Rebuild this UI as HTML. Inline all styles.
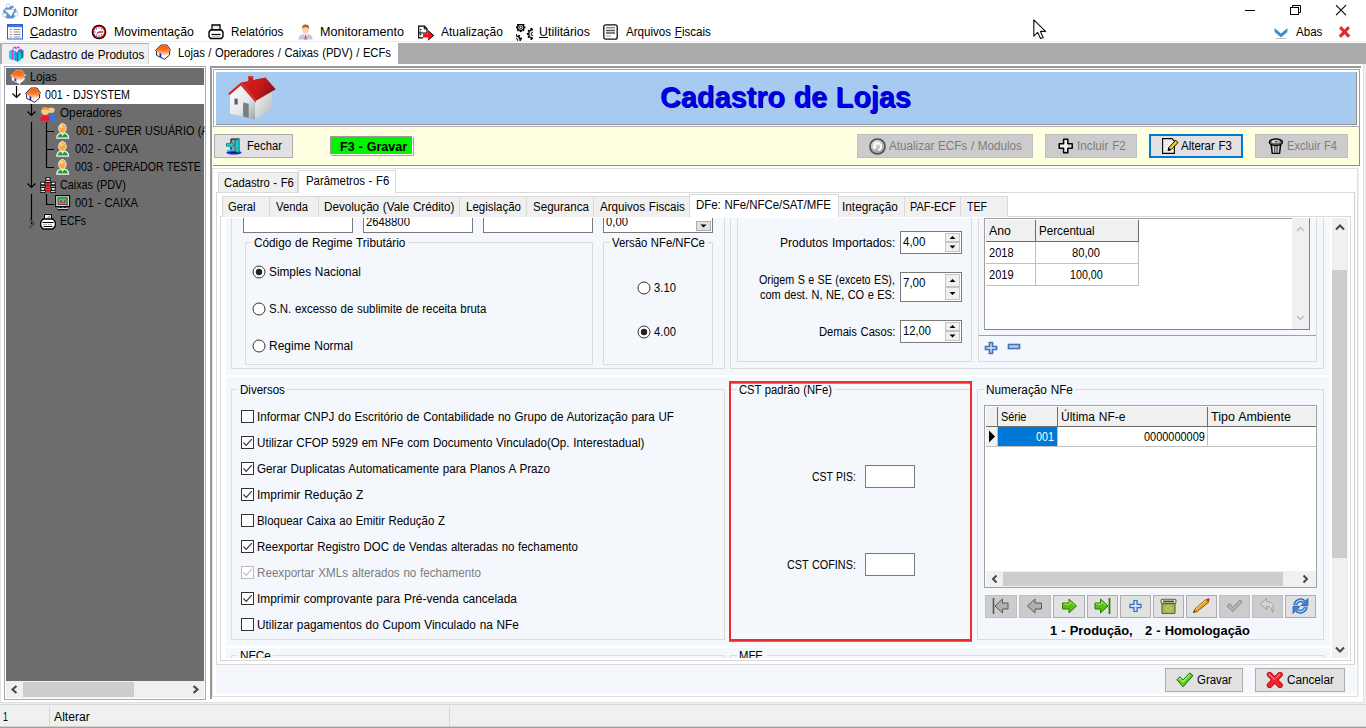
<!DOCTYPE html>
<html lang="pt-BR"><head><meta charset="utf-8"><title>DJMonitor</title>
<style>
html,body{margin:0;padding:0;}
body{width:1366px;height:728px;overflow:hidden;background:#fff;font-family:"Liberation Sans", sans-serif;font-size:12px;position:relative;}
#app{position:absolute;left:0;top:0;width:1366px;height:728px;overflow:hidden;}
#app div,#app span.t,#app svg{position:absolute;box-sizing:border-box;}
span.t{white-space:pre;display:block;word-spacing:0.5px;transform-origin:0 0;}
u{text-decoration:underline;text-underline-offset:1px;}
</style></head>
<body><div id="app">
<div style="left:0px;top:0px;width:1366px;height:22px;background:#fff;"></div>
<svg style="left:1.5px;top:2.5px" width="17" height="17"><path d="M1.4 7L4.6 4.2L11.4 2.4L11.6 4.4L8.4 6.6L14 5.4L15.2 11.4L11 15.6L5 15.4L1 12Z" fill="#5c90d0"/><path d="M2.6 6.8L12.6 6.4L9 13.2Z" fill="#fff"/><circle cx="6.2" cy="2.8" r="2" fill="#fff" stroke="#9cbce4" stroke-width=".7"/><circle cx="2.6" cy="12" r="2" fill="#fff" stroke="#9cbce4" stroke-width=".7"/><circle cx="14" cy="11.2" r="2" fill="#fff" stroke="#9cbce4" stroke-width=".7"/></svg>
<span id="t0" class="t" style="left:23.4px;top:5px;font-size:12px;line-height:14px;color:#000;transform:scaleX(1.0130);">DJMonitor</span>
<svg style="left:1240px;top:0;" width="126" height="22" viewBox="0 0 126 22"><g stroke="#000" stroke-width="1" fill="none"><path d="M5 10.5H15"/><rect x="50.5" y="7.5" width="8" height="7"/><path d="M52.5 7.5V5.5H60.5V12.5H58.5"/><path d="M96 5.2L106 15.2M106 5.2L96 15.2" stroke-width="1.1"/></g></svg>
<div style="left:0px;top:22px;width:1366px;height:21px;background:#fff;"></div>
<div style="left:0px;top:41px;width:1366px;height:1px;background:#ececec;"></div>
<span id="t1" class="t" style="left:30.4px;top:25px;font-size:12px;line-height:14px;color:#000;transform:scaleX(0.9630);"><u>C</u>adastro</span>
<span id="t2" class="t" style="left:114.4px;top:25px;font-size:12px;line-height:14px;color:#000;transform:scaleX(1.0237);">Movimentação</span>
<span id="t3" class="t" style="left:231.4px;top:25px;font-size:12px;line-height:14px;color:#000;transform:scaleX(0.9698);">Relatórios</span>
<span id="t4" class="t" style="left:320.4px;top:25px;font-size:12px;line-height:14px;color:#000;transform:scaleX(1.0481);">Monitoramento</span>
<span id="t5" class="t" style="left:440.9px;top:25px;font-size:12px;line-height:14px;color:#000;transform:scaleX(0.9976);">Atualização</span>
<span id="t6" class="t" style="left:538.9px;top:25px;font-size:12px;line-height:14px;color:#000;transform:scaleX(1.0312);"><u>U</u>tilitários</span>
<span id="t7" class="t" style="left:625.9px;top:25px;font-size:12px;line-height:14px;color:#000;transform:scaleX(0.9660);">Arquivos <u>F</u>iscais</span>
<span id="t8" class="t" style="left:1296.4px;top:25px;font-size:12px;line-height:14px;color:#000;transform:scaleX(0.9649);">Abas</span>
<svg style="left:7px;top:24px" width="16" height="16"><rect x=".5" y=".5" width="15" height="14.5" fill="#fff" stroke="#2f5fd8"/><rect x="1" y="1" width="14" height="2.2" fill="#3f74e8"/><g stroke="#8a8a9a" stroke-width="1"><path d="M2.5 5.5H5M2.5 8H5M2.5 10.5H5M2.5 13H5" stroke="#c08aa8"/><path d="M6.5 5.5H13.5M6.5 8H13.5M6.5 10.5H13.5M6.5 13H13.5"/></g></svg>
<svg style="left:91px;top:24px" width="16" height="16"><circle cx="8" cy="8" r="7.3" fill="#000"/><circle cx="8" cy="8" r="6.3" fill="#e81010"/><circle cx="8" cy="8" r="5" fill="#fff"/><g fill="#1030e0"><rect x="7.5" y="3.5" width="1" height="1"/><rect x="7.5" y="11.5" width="1" height="1"/><rect x="3.5" y="7.5" width="1" height="1"/><rect x="10" y="4.5" width="1" height="1"/><rect x="5" y="4.5" width="1" height="1"/><rect x="5" y="10.5" width="1" height="1"/><rect x="10" y="10.5" width="1" height="1"/></g><path d="M6.5 9L8 8H12" stroke="#000" stroke-width="1" fill="none"/><path d="M6 9.5L8 8" stroke="#e81010" stroke-width="1"/></svg>
<svg style="left:208px;top:24px" width="16" height="16"><path d="M4 1H12V6H4Z" fill="#f4eef4" stroke="#000" stroke-width="1.3"/><path d="M2.5 6H13.5L15 8V12.5L13.5 14.5H2.5L1 12.5V8Z" fill="#fff" stroke="#000" stroke-width="1.4"/><path d="M3.5 10.5H12.5" stroke="#000" stroke-width="1.2"/><path d="M4 12.5H12" stroke="#bbb" stroke-width="1"/></svg>
<svg style="left:298px;top:24px" width="15" height="16"><path d="M0.5 15.5C0.5 11 4 10 7.5 10C11 10 14.5 11 14.5 15.5Z" fill="#c9c2e6"/><path d="M5 10.5L7.5 13L10 10.5Z" fill="#fff"/><path d="M7 11H8.2L8.8 15.5H6.4Z" fill="#e8506a"/><ellipse cx="7.5" cy="5.5" rx="3.3" ry="4.2" fill="#f6d2b0"/><path d="M4 5C3.8 1.5 6 .3 8 .5C10.5 .6 11.5 2.5 11 5C10 3.5 8.5 3 7 3.2C5.5 3.2 4.5 4 4 5Z" fill="#a8661c"/></svg>
<svg style="left:418px;top:24.5px" width="16" height="16"><path d="M.7 1.2H6.5L9 3.8V8H.7Z M.7 8V12.8H5" fill="#fff" stroke="#000" stroke-width="1.2"/><path d="M6.3 1.2V4H9" fill="none" stroke="#000" stroke-width="1"/><g fill="#000"><rect x="2" y="4" width="1.2" height="1.2"/><rect x="2" y="6.5" width="1.2" height="1.2"/><rect x="2" y="9" width="1.2" height="1.2"/></g><path d="M5 8.5H10V5.5L15.8 10.5L10 15.2V12.5H5Z" fill="#f01018"/><path d="M10 5.5L15.8 10.5L10 15.2" fill="none" stroke="#000" stroke-width=".9"/></svg>
<svg style="left:516px;top:24px" width="16.5" height="16.5"><g fill="#000"><rect x="3.70" y="-1.30" width="2" height="2.20" transform="rotate(0.0 4.7 3.4)"/><rect x="3.70" y="-1.30" width="2" height="2.20" transform="rotate(45.0 4.7 3.4)"/><rect x="3.70" y="-1.30" width="2" height="2.20" transform="rotate(90.0 4.7 3.4)"/><rect x="3.70" y="-1.30" width="2" height="2.20" transform="rotate(135.0 4.7 3.4)"/><rect x="3.70" y="-1.30" width="2" height="2.20" transform="rotate(180.0 4.7 3.4)"/><rect x="3.70" y="-1.30" width="2" height="2.20" transform="rotate(225.0 4.7 3.4)"/><rect x="3.70" y="-1.30" width="2" height="2.20" transform="rotate(270.0 4.7 3.4)"/><rect x="3.70" y="-1.30" width="2" height="2.20" transform="rotate(315.0 4.7 3.4)"/></g><circle cx="4.7" cy="3.4" r="3.1" fill="#f0e4f2" stroke="#000" stroke-width="1.3"/><circle cx="4.7" cy="3.4" r="1.30" fill="#fff" stroke="#000" stroke-width=".9"/><g fill="#000"><rect x="16.00" y="3.70" width="2" height="2.60" transform="rotate(18.0 17 9.9)"/><rect x="16.00" y="3.70" width="2" height="2.60" transform="rotate(54.0 17 9.9)"/><rect x="16.00" y="3.70" width="2" height="2.60" transform="rotate(90.0 17 9.9)"/><rect x="16.00" y="3.70" width="2" height="2.60" transform="rotate(126.0 17 9.9)"/><rect x="16.00" y="3.70" width="2" height="2.60" transform="rotate(162.0 17 9.9)"/><rect x="16.00" y="3.70" width="2" height="2.60" transform="rotate(198.0 17 9.9)"/><rect x="16.00" y="3.70" width="2" height="2.60" transform="rotate(234.0 17 9.9)"/><rect x="16.00" y="3.70" width="2" height="2.60" transform="rotate(270.0 17 9.9)"/><rect x="16.00" y="3.70" width="2" height="2.60" transform="rotate(306.0 17 9.9)"/><rect x="16.00" y="3.70" width="2" height="2.60" transform="rotate(342.0 17 9.9)"/></g><circle cx="17" cy="9.9" r="4.2" fill="#f0e4f2" stroke="#000" stroke-width="1.3"/><circle cx="17" cy="9.9" r="1.76" fill="#fff" stroke="#000" stroke-width=".9"/><g fill="#000"><rect x="-1.20" y="9.90" width="2" height="2.60" transform="rotate(0.0 -0.2 16.3)"/><rect x="-1.20" y="9.90" width="2" height="2.60" transform="rotate(36.0 -0.2 16.3)"/><rect x="-1.20" y="9.90" width="2" height="2.60" transform="rotate(72.0 -0.2 16.3)"/><rect x="-1.20" y="9.90" width="2" height="2.60" transform="rotate(108.0 -0.2 16.3)"/><rect x="-1.20" y="9.90" width="2" height="2.60" transform="rotate(144.0 -0.2 16.3)"/><rect x="-1.20" y="9.90" width="2" height="2.60" transform="rotate(180.0 -0.2 16.3)"/><rect x="-1.20" y="9.90" width="2" height="2.60" transform="rotate(216.0 -0.2 16.3)"/><rect x="-1.20" y="9.90" width="2" height="2.60" transform="rotate(252.0 -0.2 16.3)"/><rect x="-1.20" y="9.90" width="2" height="2.60" transform="rotate(288.0 -0.2 16.3)"/><rect x="-1.20" y="9.90" width="2" height="2.60" transform="rotate(324.0 -0.2 16.3)"/></g><circle cx="-0.2" cy="16.3" r="4.4" fill="#f0e4f2" stroke="#000" stroke-width="1.3"/><circle cx="-0.2" cy="16.3" r="1.85" fill="#fff" stroke="#000" stroke-width=".9"/></svg>
<svg style="left:603px;top:24px" width="15" height="16"><rect x=".8" y=".8" width="13.4" height="14.4" rx="2" fill="#fff" stroke="#111" stroke-width="1.3"/><path d="M3 3.8H12" stroke="#4a5a80" stroke-width="1"/><path d="M3 6.5H12M3 9H12" stroke="#555" stroke-width="1.5"/><path d="M3 12H8" stroke="#999" stroke-width="1"/></svg>
<svg style="left:1274px;top:27px" width="14" height="12"><path d="M.6 1L7 6.4L13.4 1V5L7 10.4L.6 5Z" fill="#3a93c8"/><path d="M1.5 11.5H12.5" stroke="#bfc6cc" stroke-width="1"/></svg>
<svg style="left:1338px;top:26px" width="13" height="12"><path d="M1.5 2.2L3.2 .6L6.5 3.9L9.8 .6L11.5 2.2L8.3 5.8L11.8 9.6L10 11.4L6.5 7.8L3 11.4L1.2 9.6L4.7 5.8Z" fill="#e8262c" stroke="#b01218" stroke-width=".6"/></svg>
<svg style="left:1032.5px;top:18.5px" width="14" height="21"><path d="M.8 .9V17.2L4.7 13.4L7.5 19.6L10.2 18.4L7.4 12.4H12.6Z" fill="#fff" stroke="#111" stroke-width="1.1" stroke-linejoin="round"/></svg>
<div style="left:0px;top:43px;width:1366px;height:21px;background:#ababab;"></div>
<div style="left:2px;top:44px;width:147px;height:20px;background:#f0f0f0;border-right:1px solid #d4d4d4;"></div>
<div style="left:149px;top:43px;width:249px;height:23px;background:#fff;"></div>
<span id="t9" class="t" style="left:30.4px;top:48px;font-size:12px;line-height:14px;color:#000;transform:scaleX(0.9715);">Cadastro de Produtos</span>
<span id="t10" class="t" style="left:177.9px;top:46px;font-size:12px;line-height:14px;color:#000;transform:scaleX(0.9327);">Lojas / Operadores / Caixas (PDV) / ECFs</span>
<svg style="left:8px;top:46px" width="16" height="16"><path d="M1 5L4.5 3.5L8 5V12.5L4.5 14L1 12.5Z" fill="#00e0e8"/><path d="M6 7L9.5 5.5L13 7V14L9.5 15.5L6 14Z" fill="#00d0d8"/><path d="M10 4L13 3L15.5 4.5V11.5L13 13V7L10 5.5Z" fill="#008c94"/><path d="M9.5 6V15.5" stroke="#008088" stroke-width="1.2"/><path d="M4.5 3.5V14M7.8 6.3V14.8M12 4V7" stroke="#ff20e0" stroke-width="1.3"/><path d="M5 2.5L7 1L8 2.5L10.5 .8L11.5 2.5" fill="none" stroke="#ff20e0" stroke-width="1.2"/></svg>
<svg style="left:155px;top:44px" width="16" height="16"><defs><linearGradient id="rf155_44" x1="0" y1="0" x2="0" y2="1"><stop offset="0" stop-color="#ff5a00"/><stop offset=".45" stop-color="#ff7a24"/><stop offset=".75" stop-color="#ffc0a0"/><stop offset="1" stop-color="#ffffff"/></linearGradient></defs><path d="M5.8 1H12L15.5 6.2L14.6 7V11L9.5 15.3L1.6 11.4V7.2L.5 6.6Z" fill="#fff" stroke="#2a262e" stroke-width="1" stroke-linejoin="round"/><path d="M6 1.5H11.7L14.9 6.2L14 7V9.5L9.5 12.5L3.5 9.4L2.2 7.2L1.2 6.5Z" fill="url(#rf155_44)"/><path d="M5.4 9.4V13" stroke="#1432e0" stroke-width="1.8"/></svg>
<div style="left:0px;top:64px;width:1366px;height:664px;background:#f0f0f0;"></div>
<div style="left:0px;top:64px;width:1363px;height:639px;background:#fff;"></div>
<div style="left:0px;top:64px;width:1px;height:639px;background:#e4e4e4;"></div>
<div style="left:4px;top:66px;width:202px;height:634px;background:#fff;border:1px solid #a3a8b3;"></div>
<div style="left:6px;top:68px;width:198px;height:613px;background:#6d6d6d;"></div>
<div style="left:6px;top:85px;width:198px;height:19px;background:#fff;"></div>
<span id="t11" class="t" style="left:29.9px;top:70px;font-size:12px;line-height:14px;color:#000;transform:scaleX(0.9377);">Lojas</span>
<span id="t12" class="t" style="left:44.9px;top:88px;font-size:12px;line-height:14px;color:#000;transform:scaleX(0.8871);">001 - DJSYSTEM</span>
<span id="t13" class="t" style="left:59.9px;top:106px;font-size:12px;line-height:14px;color:#000;transform:scaleX(0.9767);">Operadores</span>
<span id="t14" class="t" style="left:75.9px;top:124px;font-size:12px;line-height:14px;color:#000;transform:scaleX(0.8992);width:142.9px;overflow:hidden;">001 - SUPER USUÁRIO (ADM)</span>
<span id="t15" class="t" style="left:74.9px;top:142px;font-size:12px;line-height:14px;color:#000;transform:scaleX(0.9291);">002 - CAIXA</span>
<span id="t16" class="t" style="left:74.9px;top:160px;font-size:12px;line-height:14px;color:#000;transform:scaleX(0.8825);">003 - OPERADOR TESTE</span>
<span id="t17" class="t" style="left:59.9px;top:178px;font-size:12px;line-height:14px;color:#000;transform:scaleX(0.9004);">Caixas (PDV)</span>
<span id="t18" class="t" style="left:74.9px;top:196px;font-size:12px;line-height:14px;color:#000;transform:scaleX(0.9291);">001 - CAIXA</span>
<span id="t19" class="t" style="left:59.9px;top:214px;font-size:12px;line-height:14px;color:#000;transform:scaleX(0.8633);">ECFs</span>
<svg style="left:10px;top:69px" width="16" height="16"><defs><linearGradient id="rf10_69" x1="0" y1="0" x2="0" y2="1"><stop offset="0" stop-color="#ff5a00"/><stop offset=".45" stop-color="#ff7a24"/><stop offset=".75" stop-color="#ffc0a0"/><stop offset="1" stop-color="#ffffff"/></linearGradient></defs><path d="M5.8 1H12L15.5 6.2L14.6 7V11L9.5 15.3L1.6 11.4V7.2L.5 6.6Z" fill="#fff" stroke="#8a8a8a" stroke-width="1" stroke-linejoin="round"/><path d="M6 1.5H11.7L14.9 6.2L14 7V9.5L9.5 12.5L3.5 9.4L2.2 7.2L1.2 6.5Z" fill="url(#rf10_69)"/><path d="M5.4 9.4V13" stroke="#1432e0" stroke-width="1.8"/><g fill="#fff" opacity=".85"><rect x="2" y="8" width="1" height="1"/><rect x="3" y="10" width="1" height="1"/><rect x="5" y="12" width="1" height="1"/><rect x="7" y="13" width="1" height="1"/><rect x="10" y="13" width="1" height="1"/><rect x="12" y="11" width="1" height="1"/><rect x="14" y="9" width="1" height="1"/><rect x="1" y="6" width="1" height="1"/><rect x="15" y="6" width="1" height="1"/><rect x="9" y="15" width="1" height="1"/></g></svg>
<svg style="left:25px;top:87px" width="16" height="16"><defs><linearGradient id="rf25_87" x1="0" y1="0" x2="0" y2="1"><stop offset="0" stop-color="#ff5a00"/><stop offset=".45" stop-color="#ff7a24"/><stop offset=".75" stop-color="#ffc0a0"/><stop offset="1" stop-color="#ffffff"/></linearGradient></defs><path d="M5.8 1H12L15.5 6.2L14.6 7V11L9.5 15.3L1.6 11.4V7.2L.5 6.6Z" fill="#fff" stroke="#2a262e" stroke-width="1" stroke-linejoin="round"/><path d="M6 1.5H11.7L14.9 6.2L14 7V9.5L9.5 12.5L3.5 9.4L2.2 7.2L1.2 6.5Z" fill="url(#rf25_87)"/><path d="M5.4 9.4V13" stroke="#1432e0" stroke-width="1.8"/></svg>
<svg style="left:40px;top:105px" width="16" height="16"><circle cx="11" cy="4.5" r="3.6" fill="#f2c9a0"/><path d="M7.6 3.8C8 1 10 .4 11.5 .6C13.6 .8 14.6 2.4 14.4 4C13 2.6 10 2.4 7.6 3.8Z" fill="#9a6a3a"/><path d="M6.5 15.5C6.5 10.5 9 9.5 11.2 9.5C13.6 9.5 15.8 10.8 15.8 15.5Z" fill="#2a7af0"/><circle cx="5.2" cy="6.2" r="3.8" fill="#f8cf8a"/><path d="M1.4 5.6C1.6 2.4 4 1.8 5.6 2C7.8 2.2 9 3.8 8.8 5.6C7 4.2 4 4.2 1.4 5.6Z" fill="#f0a020"/><path d="M.2 15.8C.2 11.4 2.6 10.4 5.2 10.4C8 10.4 10.2 11.6 10.2 15.8Z" fill="#f01828"/></svg>
<svg style="left:56px;top:123px" width="14" height="16"><path d="M.8 15.2C.8 11 3.5 9.8 6.5 9.8C10 9.8 12.6 11 12.6 15.2Z" fill="#2f9a3a" stroke="#f4f4f4" stroke-width="1.2"/><path d="M5 10.5L6.6 13L8.2 10.5Z" fill="#e8f4e8"/><ellipse cx="6.4" cy="5.4" rx="3.7" ry="4.8" fill="#f8a838" stroke="#f4f4f4" stroke-width="1"/><ellipse cx="5.6" cy="3.6" rx="1.8" ry="1.8" fill="#ffd070"/></svg>
<svg style="left:56px;top:141px" width="14" height="16"><path d="M.8 15.2C.8 11 3.5 9.8 6.5 9.8C10 9.8 12.6 11 12.6 15.2Z" fill="#2f9a3a" stroke="#f4f4f4" stroke-width="1.2"/><path d="M5 10.5L6.6 13L8.2 10.5Z" fill="#e8f4e8"/><ellipse cx="6.4" cy="5.4" rx="3.7" ry="4.8" fill="#f8a838" stroke="#f4f4f4" stroke-width="1"/><ellipse cx="5.6" cy="3.6" rx="1.8" ry="1.8" fill="#ffd070"/></svg>
<svg style="left:56px;top:159px" width="14" height="16"><path d="M.8 15.2C.8 11 3.5 9.8 6.5 9.8C10 9.8 12.6 11 12.6 15.2Z" fill="#2f9a3a" stroke="#f4f4f4" stroke-width="1.2"/><path d="M5 10.5L6.6 13L8.2 10.5Z" fill="#e8f4e8"/><ellipse cx="6.4" cy="5.4" rx="3.7" ry="4.8" fill="#f8a838" stroke="#f4f4f4" stroke-width="1"/><ellipse cx="5.6" cy="3.6" rx="1.8" ry="1.8" fill="#ffd070"/></svg>
<svg style="left:40px;top:177px" width="16" height="16"><rect x="6.4" y="4.5" width="3" height="10.5" fill="#f01018"/><rect x="6" y="0.6000000000000001" width="4" height="2.6" fill="#fff" stroke="#000" stroke-width=".9"/><rect x="5.4" y="3.8" width="5.2" height="1.6" fill="#fff" stroke="#000" stroke-width=".8"/><rect x="0.7999999999999998" y="5.2" width="4" height="2.6" fill="#fff" stroke="#000" stroke-width=".9"/><rect x="0.19999999999999973" y="8.4" width="5.2" height="1.6" fill="#fff" stroke="#000" stroke-width=".8"/><rect x="11.2" y="5.2" width="4" height="2.6" fill="#fff" stroke="#000" stroke-width=".9"/><rect x="10.6" y="8.4" width="5.2" height="1.6" fill="#fff" stroke="#000" stroke-width=".8"/><rect x="0.7999999999999998" y="10.6" width="4" height="2.6" fill="#fff" stroke="#000" stroke-width=".9"/><rect x="0.19999999999999973" y="13.799999999999999" width="5.2" height="1.6" fill="#fff" stroke="#000" stroke-width=".8"/><rect x="11.2" y="10.6" width="4" height="2.6" fill="#fff" stroke="#000" stroke-width=".9"/><rect x="10.6" y="13.799999999999999" width="5.2" height="1.6" fill="#fff" stroke="#000" stroke-width=".8"/><rect x="7.3" y=".6" width="1.4" height="1" fill="#e040e0"/></svg>
<svg style="left:55px;top:195px" width="16" height="16"><rect x=".6" y=".6" width="14" height="11" fill="#d8d8d8" stroke="#000" stroke-width="1.1"/><rect x="3" y="2.8" width="9.2" height="6.6" fill="#20e030" stroke="#303030" stroke-width=".8"/><path d="M5 5H7V7H9V5H10.5V8H5Z" fill="#e020a0"/><rect x="11.5" y="10.2" width="1.4" height="1" fill="#f01018"/><path d="M5.5 11.8V13.6H10V11.8M2.5 14.6H12.8" stroke="#000" stroke-width="1.3" fill="none"/><path d="M3 13.6H12.5" stroke="#eee" stroke-width="1"/></svg>
<svg style="left:40px;top:213px" width="16" height="17"><path d="M4.5 6V1.5H11.5V6" fill="#fff" stroke="#000" stroke-width="1"/><path d="M6 5L10.5 1.8V5Z" fill="#a8a8a8"/><path d="M3 6H13L15.3 9V13L13 16H3L.7 13V9Z" fill="#fff" stroke="#000" stroke-width="1.3"/><path d="M2.5 9.5H13.5M3.5 13.5H12.5" stroke="#000" stroke-width="1.1"/><path d="M3 11.5H13" stroke="#999" stroke-width="1.2" stroke-dasharray="1.5 1"/></svg>
<svg style="left:6px;top:68px" width="60" height="170"><g stroke="#000" stroke-width="1.2" fill="none"><path d="M10.5 18V29"/><path d="M6.5 25.5L10.5 29.5L14.5 25.5"/><path d="M25.5 36V47"/><path d="M21.5 43.5L25.5 47.5L29.5 43.5"/><path d="M25.500 54V119"/><path d="M21.5 115.500L25.5 119.5L29.5 115.500"/><path d="M25.500 126V156"/><path d="M40.5 54V99.500H48"/><path d="M40.5 63.500H48M40.5 81.500H48"/><path d="M40.5 126V136.500H48"/></g><path d="M23.5 151L28 155.500L23.5 160" stroke="#4a4a4a" stroke-width="1.8" fill="none"/></svg>
<div style="left:6px;top:681px;width:198px;height:17px;background:#f0f0f0;"></div>
<div style="left:23px;top:682px;width:111px;height:15px;background:#cdcdcd;"></div>
<svg style="left:6px;top:681px" width="198" height="17"><g stroke="#484848" stroke-width="2.1" fill="none"><path d="M10.500 5L6.5 8.5L10.500 12"/><path d="M187.500 5L191.5 8.5L187.500 12"/></g></svg>
<div style="left:0px;top:702px;width:1364px;height:1px;background:#e0e0e0;"></div>
<div style="left:1363px;top:64px;width:1px;height:639px;background:#e0e0e0;"></div>
<div style="left:210px;top:66px;width:1151px;height:2px;background:#999;"></div>
<div style="left:210px;top:66px;width:2px;height:633px;background:#999;"></div>
<div style="left:213px;top:69px;width:1147px;height:58px;background:#fff;border:1px solid #a8a8b0;border-right-color:#9c9ca4;"></div>
<div style="left:216px;top:72px;width:1141px;height:53px;background:#a6caf0;border-right:1px solid #909090;border-bottom:1px solid #909090;"></div>
<span id="t20" class="t" style="left:659.9px;top:80px;font-size:29.33px;line-height:33px;color:#0000f0;font-weight:bold;transform:scaleX(0.9830);text-shadow:1px 1px 0 #000078;">Cadastro de Lojas</span>
<svg style="left:227.5px;top:76px" width="48" height="44"><defs><linearGradient id="hw1" x1="0" y1="0" x2="1" y2="1"><stop offset="0" stop-color="#ffffff"/><stop offset=".6" stop-color="#e4e6e8"/><stop offset="1" stop-color="#9aa0a6"/></linearGradient><linearGradient id="hw2" x1="0" y1="0" x2="1" y2="1"><stop offset="0" stop-color="#f4f4f4"/><stop offset="1" stop-color="#b4b8bc"/></linearGradient><linearGradient id="hr" x1="0" y1="0" x2="1" y2=".3"><stop offset="0" stop-color="#e02020"/><stop offset=".6" stop-color="#c81818"/><stop offset="1" stop-color="#8a1414"/></linearGradient></defs><rect x="20.3" y=".3" width="4.8" height="6" rx=".8" fill="#c42020"/><rect x="19.8" y=".2" width="5.8" height="1.8" rx=".8" fill="#d83030"/><path d="M2 17L13 8.3L27 24V43.5L2 37.5Z" fill="url(#hw1)"/><path d="M27 24L44 15V32.5L27 43.5Z" fill="url(#hw2)"/><path d="M12.9 6.6L37.4 1.5L47.8 13.2L28.4 24.6Z" fill="url(#hr)"/><path d="M.2 17.6L12.9 6.6L28.4 24.6L27.6 26.6L12.8 9.6L1.4 19.2Z" fill="#d42424"/><rect x="6.5" y="22.7" width="3.2" height="5.8" fill="#5a5e64"/><path d="M15.1 26.6L20.7 27.8V42L15.1 40.6Z" fill="#7a7e84"/></svg>
<div style="left:213px;top:127px;width:1147px;height:39px;background:#ffffe1;border-right:1px solid #909090;border-bottom:1px solid #909090;"></div>
<div style="left:212px;top:168px;width:1146px;height:529px;background:#fff;border:1px solid #e0e0e0;"></div>
<div style="left:1358px;top:169px;width:1px;height:528px;background:#f0f0f0;"></div>
<div style="left:214px;top:134px;width:79px;height:24px;background:#e1e1e1;border:1px solid #adadad;"></div>
<span id="t21" class="t" style="left:246.7px;top:139px;font-size:12px;line-height:14px;color:#000;transform:scaleX(0.9342);">Fechar</span>
<svg style="left:226px;top:137.5px" width="16" height="17"><ellipse cx="8" cy="14.6" rx="7.6" ry="1.9" fill="#0828e8"/><path d="M5 1H12.5V14H5Z" fill="#9a9a9a" stroke="#000" stroke-width="1"/><path d="M9 2L13.2 .6V15L9 13.6Z" fill="#18c8d0" stroke="#006068" stroke-width=".8"/><path d="M.5 5.6H4.5V3.4L8 6.9L4.5 10.4V8.2H.5Z" fill="#18d8e0" stroke="#006068" stroke-width=".7"/><path d="M1 12.6H6" stroke="#18d8e0" stroke-width="1.6"/></svg>
<div style="left:330px;top:136px;width:83px;height:19px;background:#00f400;border-top:1px solid #a098a0;border-left:1px solid #a098a0;border-right:1px solid #fff;border-bottom:1px solid #fff;box-shadow:1px 1px 0 #a8a8a8;"></div>
<span id="t22" class="t" style="left:339.7px;top:139px;font-size:13px;line-height:15px;color:#000;font-weight:bold;transform:scaleX(0.9633);">F3 - Gravar</span>
<div style="left:857px;top:134px;width:176px;height:24px;background:#cccccc;border:1px solid #bfbfbf;"></div>
<span id="t23" class="t" style="left:888.9px;top:139px;font-size:12px;line-height:14px;color:#7c7c7c;transform:scaleX(0.9708);">Atualizar ECFs / Modulos</span>
<svg style="left:868.5px;top:137.5px" width="17" height="17"><defs><radialGradient id="rg1" cx=".4" cy=".3" r=".8"><stop offset="0" stop-color="#e8e8e8"/><stop offset="1" stop-color="#8e8e8e"/></radialGradient></defs><circle cx="8.5" cy="8.5" r="7.6" fill="url(#rg1)" stroke="#4e4e4e" stroke-width="1.5"/><path d="M5.4 9.6A3.5 3.5 0 1 1 9.4 12" fill="none" stroke="#fff" stroke-width="1.9"/><path d="M3.2 8.8H7.6L5.4 11.8Z" fill="#fff"/></svg>
<div style="left:1045px;top:134px;width:92px;height:24px;background:#cccccc;border:1px solid #bfbfbf;"></div>
<span id="t24" class="t" style="left:1076.9px;top:139px;font-size:12px;line-height:14px;color:#7c7c7c;transform:scaleX(0.9808);">Incluir F2</span>
<svg style="left:1057.5px;top:138px" width="16" height="16"><path d="M5.6 1.2H9.8V5.8H14.2V10.2H9.8V14.8H5.6V10.2H1.2V5.8H5.6Z" fill="#f2f2f2" stroke="#000" stroke-width="1.5" stroke-linejoin="round"/><path d="M6.8 11V13.6H8.8M11 7V9H13" stroke="#b8b8b8" stroke-width="1" fill="none"/></svg>
<div style="left:1149px;top:134px;width:94px;height:24px;background:#e1e1e1;border:2px solid #0078d7;"></div>
<span id="t25" class="t" style="left:1180.9px;top:139px;font-size:12px;line-height:14px;color:#000;transform:scaleX(0.9570);">Alterar F3</span>
<svg style="left:1161.5px;top:138px" width="17" height="16"><path d="M.6 .6H10L12.4 3V15.4H.6Z" fill="#f4eef6" stroke="#000" stroke-width="1.1"/><g fill="#d8c8e0"><rect x="2.5" y="3" width="1" height="1"/><rect x="5" y="3" width="1" height="1"/><rect x="2.5" y="6" width="1" height="1"/><rect x="5" y="6" width="1" height="1"/><rect x="2.5" y="9" width="1" height="1"/><rect x="2.5" y="12" width="1" height="1"/><rect x="7.5" y="12" width="1" height="1"/></g><path d="M6 12.5L6.8 9.6L13.6 2.4L16 4.6L9 11.8Z" fill="#f8d020" stroke="#000" stroke-width="1"/><path d="M6 12.5L6.8 9.6L9 11.8Z" fill="#000"/></svg>
<div style="left:1255px;top:134px;width:93px;height:24px;background:#cccccc;border:1px solid #bfbfbf;"></div>
<span id="t26" class="t" style="left:1286.9px;top:139px;font-size:12px;line-height:14px;color:#7c7c7c;transform:scaleX(0.9268);">Excluir F4</span>
<svg style="left:1267.5px;top:137.5px" width="16" height="17"><path d="M3 6L4.2 15.4H11.6L12.8 6Z" fill="#8c8c8c" stroke="#000" stroke-width="1.3"/><g stroke="#e6e6e6" stroke-width="1"><path d="M5.6 8V14.6M7.9 8V14.6M10.2 8V14.6"/></g><g stroke="#3a3a3a" stroke-width=".8"><path d="M6.7 8V14.6M9 8V14.6"/></g><ellipse cx="7.9" cy="4.2" rx="6.6" ry="3.3" fill="#6a6a6a" stroke="#000" stroke-width="1.3"/><ellipse cx="7.6" cy="3.4" rx="4" ry="1.5" fill="#e8e8e8"/><ellipse cx="8.2" cy="3.8" rx="2" ry=".7" fill="#4a4a4a"/></svg>
<div style="left:216px;top:192px;width:1139px;height:473px;background:#fff;border:1px solid #d9d9d9;border-right-color:#d0d0d0;"></div>
<div style="left:218px;top:172px;width:80px;height:20px;background:#f0f0f0;border:1px solid #d9d9d9;border-bottom:none;"></div>
<div style="left:298px;top:170px;width:98px;height:23px;background:#fff;border:1px solid #d9d9d9;border-bottom:none;"></div>
<span id="t27" class="t" style="left:224.4px;top:176px;font-size:12px;line-height:14px;color:#000;transform:scaleX(0.9400);">Cadastro - F6</span>
<span id="t28" class="t" style="left:306.4px;top:174px;font-size:12px;line-height:14px;color:#000;transform:scaleX(0.9509);">Parâmetros - F6</span>
<div style="left:220px;top:216px;width:1131px;height:445px;background:#fff;border:1px solid #d9d9d9;"></div>
<div style="left:222px;top:196px;width:48px;height:21px;background:#f0f0f0;border:1px solid #d9d9d9;border-bottom:none;"></div>
<span id="t29" class="t" style="left:228.4px;top:200px;font-size:12px;line-height:14px;color:#000;transform:scaleX(0.9338);">Geral</span>
<div style="left:269px;top:196px;width:50px;height:21px;background:#f0f0f0;border:1px solid #d9d9d9;border-bottom:none;"></div>
<span id="t30" class="t" style="left:275.9px;top:200px;font-size:12px;line-height:14px;color:#000;transform:scaleX(0.9369);">Venda</span>
<div style="left:318px;top:196px;width:142px;height:21px;background:#f0f0f0;border:1px solid #d9d9d9;border-bottom:none;"></div>
<span id="t31" class="t" style="left:323.9px;top:200px;font-size:12px;line-height:14px;color:#000;transform:scaleX(0.9719);">Devolução (Vale Crédito)</span>
<div style="left:459px;top:196px;width:68px;height:21px;background:#f0f0f0;border:1px solid #d9d9d9;border-bottom:none;"></div>
<span id="t32" class="t" style="left:465.9px;top:200px;font-size:12px;line-height:14px;color:#000;transform:scaleX(0.9569);">Legislação</span>
<div style="left:526px;top:196px;width:68px;height:21px;background:#f0f0f0;border:1px solid #d9d9d9;border-bottom:none;"></div>
<span id="t33" class="t" style="left:532.9px;top:200px;font-size:12px;line-height:14px;color:#000;transform:scaleX(0.9630);">Seguranca</span>
<div style="left:593px;top:196px;width:97px;height:21px;background:#f0f0f0;border:1px solid #d9d9d9;border-bottom:none;"></div>
<span id="t34" class="t" style="left:599.9px;top:200px;font-size:12px;line-height:14px;color:#000;transform:scaleX(0.9663);">Arquivos Fiscais</span>
<div style="left:838px;top:196px;width:67px;height:21px;background:#f0f0f0;border:1px solid #d9d9d9;border-bottom:none;"></div>
<span id="t35" class="t" style="left:842.4px;top:200px;font-size:12px;line-height:14px;color:#000;transform:scaleX(0.9856);">Integração</span>
<div style="left:904px;top:196px;width:57px;height:21px;background:#f0f0f0;border:1px solid #d9d9d9;border-bottom:none;"></div>
<span id="t36" class="t" style="left:909.9px;top:200px;font-size:12px;line-height:14px;color:#000;transform:scaleX(0.9098);">PAF-ECF</span>
<div style="left:960px;top:196px;width:48px;height:21px;background:#f0f0f0;border:1px solid #d9d9d9;border-bottom:none;"></div>
<span id="t37" class="t" style="left:966.9px;top:200px;font-size:12px;line-height:14px;color:#000;transform:scaleX(0.8777);">TEF</span>
<div style="left:689px;top:194px;width:150px;height:24px;background:#fff;border:1px solid #d9d9d9;border-bottom:none;"></div>
<span id="t38" class="t" style="left:695.9px;top:198px;font-size:12px;line-height:14px;color:#000;transform:scaleX(0.9525);">DFe: NFe/NFCe/SAT/MFE</span>
<div style="left:222px;top:217px;width:1110px;height:441px;background:#fff;"></div>
<div style="left:226px;top:218px;width:1104px;height:440px;background:#f4f7fc;"></div>
<div style="left:226px;top:375px;width:1104px;height:2px;background:#fff;"></div>
<div style="left:226px;top:646px;width:1104px;height:2px;background:#fff;"></div>
<div style="left:1332px;top:218px;width:16px;height:440px;background:#f0f0f0;"></div>
<div style="left:1332px;top:270px;width:15px;height:288px;background:#cdcdcd;"></div>
<svg style="left:1332px;top:217px" width="16" height="442"><g stroke="#484848" stroke-width="2.1" fill="none"><path d="M4 12.5L8 8.5L12 12.5"/><path d="M4 430.500L8 434.5L12 430.500"/></g></svg>
<div style="left:231px;top:210px;width:494px;height:159px;border:1px solid #dcdcdc;clip-path:inset(8px 0 0 0);"></div>
<div style="left:243px;top:210px;width:110px;height:23px;background:#fff;border:1px solid #7a7a7a;clip-path:inset(8px 0 0 0);"></div>
<div style="left:363px;top:210px;width:110px;height:23px;background:#fff;border:1px solid #7a7a7a;clip-path:inset(8px 0 0 0);"></div>
<div style="left:483px;top:210px;width:110px;height:23px;background:#fff;border:1px solid #7a7a7a;clip-path:inset(8px 0 0 0);"></div>
<div style="left:603px;top:210px;width:110px;height:23px;background:#fff;border:1px solid #7a7a7a;clip-path:inset(8px 0 0 0);"></div>
<span id="t39" class="t" style="left:365.9px;top:215px;font-size:12px;line-height:14px;color:#000;transform:scaleX(0.9397);clip-path:inset(3px 0 0 0);">2648800</span>
<span id="t40" class="t" style="left:606.4px;top:215px;font-size:12px;line-height:14px;color:#000;transform:scaleX(0.9375);clip-path:inset(3px 0 0 0);">0,00</span>
<div style="left:696px;top:221px;width:15px;height:10px;background:#e1e1e1;border:1px solid #adadad;"></div>
<svg style="left:696px;top:221px" width="15" height="10"><path d="M4.5 3.5H10.5L7.5 6.5Z" fill="#000"/></svg>
<div style="left:245px;top:242px;width:348px;height:123px;border:1px solid #dcdcdc;"></div>
<div style="left:252px;top:236px;width:156px;height:14px;background:#f4f7fc;"></div>
<span id="t41" class="t" style="left:254.4px;top:236px;font-size:12px;line-height:14px;color:#000;transform:scaleX(0.9815);">Código de Regime Tributário</span>
<div style="left:603px;top:242px;width:110px;height:123px;border:1px solid #dcdcdc;"></div>
<div style="left:610px;top:236px;width:97px;height:14px;background:#f4f7fc;"></div>
<span id="t42" class="t" style="left:611.9px;top:236px;font-size:12px;line-height:14px;color:#000;transform:scaleX(0.9427);">Versão NFe/NFCe</span>
<svg style="left:252.0px;top:264.5px" width="14" height="14"><circle cx="7" cy="7" r="6" fill="#fff" stroke="#333" stroke-width="1"/><circle cx="7" cy="7" r="3.2" fill="#222"/></svg>
<span id="t43" class="t" style="left:268.9px;top:265px;font-size:12px;line-height:14px;color:#000;transform:scaleX(0.9859);">Simples Nacional</span>
<svg style="left:252.0px;top:301.5px" width="14" height="14"><circle cx="7" cy="7" r="6" fill="#fff" stroke="#333" stroke-width="1"/></svg>
<span id="t44" class="t" style="left:268.9px;top:302px;font-size:12px;line-height:14px;color:#000;transform:scaleX(0.9544);">S.N. excesso de sublimite de receita bruta</span>
<svg style="left:252.0px;top:338.5px" width="14" height="14"><circle cx="7" cy="7" r="6" fill="#fff" stroke="#333" stroke-width="1"/></svg>
<span id="t45" class="t" style="left:268.9px;top:339px;font-size:12px;line-height:14px;color:#000;transform:scaleX(1.0005);">Regime Normal</span>
<svg style="left:637.0px;top:280.5px" width="14" height="14"><circle cx="7" cy="7" r="6" fill="#fff" stroke="#333" stroke-width="1"/></svg>
<span id="t46" class="t" style="left:653.9px;top:281px;font-size:12px;line-height:14px;color:#000;transform:scaleX(0.9375);">3.10</span>
<svg style="left:637.0px;top:324.5px" width="14" height="14"><circle cx="7" cy="7" r="6" fill="#fff" stroke="#333" stroke-width="1"/><circle cx="7" cy="7" r="3.2" fill="#222"/></svg>
<span id="t47" class="t" style="left:653.9px;top:325px;font-size:12px;line-height:14px;color:#000;transform:scaleX(0.9375);">4.00</span>
<div style="left:730px;top:210px;width:594px;height:159px;border:1px solid #dcdcdc;clip-path:inset(8px 0 0 0);"></div>
<div style="left:737px;top:210px;width:235px;height:152px;border:1px solid #dcdcdc;clip-path:inset(8px 0 0 0);"></div>
<div style="left:978px;top:210px;width:339px;height:152px;border:1px solid #dcdcdc;clip-path:inset(8px 0 0 0);"></div>
<span id="t48" class="t" style="left:779.9px;top:236px;font-size:12px;line-height:14px;color:#000;transform:scaleX(1.0014);">Produtos Importados:</span>
<span id="t49" class="t" style="left:759.4px;top:273px;font-size:12px;line-height:14px;color:#000;transform:scaleX(0.8947);">Origem S e SE (exceto ES),</span>
<span id="t50" class="t" style="left:760.4px;top:288px;font-size:12px;line-height:14px;color:#000;transform:scaleX(0.9132);">com dest. N, NE, CO e ES:</span>
<span id="t51" class="t" style="left:818.9px;top:325px;font-size:12px;line-height:14px;color:#000;transform:scaleX(0.9333);">Demais Casos:</span>
<div style="left:900px;top:231px;width:62px;height:23px;background:#fff;border:1px solid #7a7a7a;"></div>
<span id="t52" class="t" style="left:902.9px;top:235px;font-size:12px;line-height:14px;color:#000;transform:scaleX(0.9589);">4,00</span>
<div style="left:945px;top:233px;width:15px;height:9px;background:#f0f0f0;border:1px solid #c4c4c4;"></div>
<div style="left:945px;top:242px;width:15px;height:10px;background:#f0f0f0;border:1px solid #c4c4c4;"></div>
<svg style="left:945px;top:233px" width="15" height="19"><path d="M4.5 6.0H10.5L7.5 3.0Z" fill="#000"/><path d="M4.5 12.5H10.5L7.5 15.5Z" fill="#000"/></svg>
<div style="left:900px;top:272px;width:62px;height:30px;background:#fff;border:1px solid #7a7a7a;"></div>
<span id="t53" class="t" style="left:902.9px;top:276px;font-size:12px;line-height:14px;color:#000;transform:scaleX(0.9589);">7,00</span>
<div style="left:945px;top:274px;width:15px;height:13px;background:#f0f0f0;border:1px solid #c4c4c4;"></div>
<div style="left:945px;top:287px;width:15px;height:13px;background:#f0f0f0;border:1px solid #c4c4c4;"></div>
<svg style="left:945px;top:274px" width="15" height="26"><path d="M4.5 8.0H10.5L7.5 5.0Z" fill="#000"/><path d="M4.5 18.0H10.5L7.5 21.0Z" fill="#000"/></svg>
<div style="left:900px;top:320px;width:62px;height:23px;background:#fff;border:1px solid #7a7a7a;"></div>
<span id="t54" class="t" style="left:902.9px;top:324px;font-size:12px;line-height:14px;color:#000;transform:scaleX(0.9290);">12,00</span>
<div style="left:945px;top:322px;width:15px;height:9px;background:#f0f0f0;border:1px solid #c4c4c4;"></div>
<div style="left:945px;top:331px;width:15px;height:10px;background:#f0f0f0;border:1px solid #c4c4c4;"></div>
<svg style="left:945px;top:322px" width="15" height="19"><path d="M4.5 6.0H10.5L7.5 3.0Z" fill="#000"/><path d="M4.5 12.5H10.5L7.5 15.5Z" fill="#000"/></svg>
<div style="left:984px;top:218px;width:326px;height:112px;background:#fff;border:1px solid #828282;border-top-color:#a0a0a0;border-left-color:#a0a0a0;"></div>
<div style="left:986px;top:220px;width:153px;height:22px;background:#f0f0f0;"></div>
<div style="left:986px;top:241px;width:153px;height:1px;background:#6d6d6d;"></div>
<div style="left:1035px;top:220px;width:1px;height:22px;background:#6d6d6d;"></div>
<div style="left:1138px;top:220px;width:1px;height:22px;background:#6d6d6d;"></div>
<div style="left:986px;top:263px;width:153px;height:1px;background:#c0c0c0;"></div>
<div style="left:986px;top:285px;width:153px;height:1px;background:#c0c0c0;"></div>
<div style="left:1035px;top:242px;width:1px;height:44px;background:#c0c0c0;"></div>
<div style="left:1138px;top:242px;width:1px;height:44px;background:#c0c0c0;"></div>
<span id="t55" class="t" style="left:989.2px;top:224px;font-size:12px;line-height:14px;color:#000;transform:scaleX(1.0253);">Ano</span>
<span id="t56" class="t" style="left:1039.4px;top:224px;font-size:12px;line-height:14px;color:#000;transform:scaleX(0.9691);">Percentual</span>
<span id="t57" class="t" style="left:989.2px;top:246px;font-size:12px;line-height:14px;color:#000;transform:scaleX(0.9212);">2018</span>
<span id="t58" class="t" style="left:1071.9px;top:246px;font-size:12px;line-height:14px;color:#000;transform:scaleX(0.9290);">80,00</span>
<span id="t59" class="t" style="left:989.2px;top:268px;font-size:12px;line-height:14px;color:#000;transform:scaleX(0.9212);">2019</span>
<span id="t60" class="t" style="left:1069.8px;top:268px;font-size:12px;line-height:14px;color:#000;transform:scaleX(0.8909);">100,00</span>
<div style="left:1292px;top:218px;width:17px;height:111px;background:#f0f0f0;"></div>
<svg style="left:1292px;top:218px" width="17" height="111"><g stroke="#bdbdbd" stroke-width="1.5" fill="none"><path d="M5 13L8.5 9.5L12 13"/><path d="M5 98L8.5 101.5L12 98"/></g></svg>
<div style="left:979px;top:335px;width:337px;height:1px;background:#a0a0a0;"></div>
<svg style="left:984px;top:341px" width="40" height="14"><path d="M5.5 1.5H8.5V5.5H12.5V8.5H8.5V12.5H5.5V8.5H1.5V5.5H5.5Z" fill="#dbe8f7" stroke="#3f74b8" stroke-width="1.7"/><rect x="24.5" y="3.5" width="11" height="4" fill="#b9d0ee" stroke="#3f74b8" stroke-width="1.6"/></svg>
<div style="left:231px;top:389px;width:494px;height:251px;border:1px solid #dcdcdc;"></div>
<div style="left:237px;top:383px;width:50px;height:14px;background:#f4f7fc;"></div>
<span id="t61" class="t" style="left:239.9px;top:383px;font-size:12px;line-height:14px;color:#000;transform:scaleX(0.9617);">Diversos</span>
<svg style="left:241px;top:410px" width="13" height="13"><rect x="0.5" y="0.5" width="12" height="12" fill="#fff" stroke="#333"/></svg>
<span id="t62" class="t" style="left:256.9px;top:410px;font-size:12px;line-height:14px;color:#000;transform:scaleX(0.9671);">Informar CNPJ do Escritório de Contabilidade no Grupo de Autorização para UF</span>
<svg style="left:241px;top:436px" width="13" height="13"><rect x="0.5" y="0.5" width="12" height="12" fill="#fff" stroke="#333"/><path d="M2.4 6.3L5.2 9.3L10.8 3.2" fill="none" stroke="#333" stroke-width="1.15"/></svg>
<span id="t63" class="t" style="left:256.9px;top:436px;font-size:12px;line-height:14px;color:#000;transform:scaleX(0.9691);">Utilizar CFOP 5929 em NFe com Documento Vinculado(Op. Interestadual)</span>
<svg style="left:241px;top:462px" width="13" height="13"><rect x="0.5" y="0.5" width="12" height="12" fill="#fff" stroke="#333"/><path d="M2.4 6.3L5.2 9.3L10.8 3.2" fill="none" stroke="#333" stroke-width="1.15"/></svg>
<span id="t64" class="t" style="left:256.9px;top:462px;font-size:12px;line-height:14px;color:#000;transform:scaleX(0.9725);">Gerar Duplicatas Automaticamente para Planos A Prazo</span>
<svg style="left:241px;top:488px" width="13" height="13"><rect x="0.5" y="0.5" width="12" height="12" fill="#fff" stroke="#333"/><path d="M2.4 6.3L5.2 9.3L10.8 3.2" fill="none" stroke="#333" stroke-width="1.15"/></svg>
<span id="t65" class="t" style="left:256.9px;top:488px;font-size:12px;line-height:14px;color:#000;transform:scaleX(1.0004);">Imprimir Redução Z</span>
<svg style="left:241px;top:514px" width="13" height="13"><rect x="0.5" y="0.5" width="12" height="12" fill="#fff" stroke="#333"/></svg>
<span id="t66" class="t" style="left:256.9px;top:514px;font-size:12px;line-height:14px;color:#000;transform:scaleX(0.9525);">Bloquear Caixa ao Emitir Redução Z</span>
<svg style="left:241px;top:540px" width="13" height="13"><rect x="0.5" y="0.5" width="12" height="12" fill="#fff" stroke="#333"/><path d="M2.4 6.3L5.2 9.3L10.8 3.2" fill="none" stroke="#333" stroke-width="1.15"/></svg>
<span id="t67" class="t" style="left:256.9px;top:540px;font-size:12px;line-height:14px;color:#000;transform:scaleX(0.9540);">Reexportar Registro DOC de Vendas alteradas no fechamento</span>
<svg style="left:241px;top:566px" width="13" height="13"><rect x="0.5" y="0.5" width="12" height="12" fill="#fff" stroke="#bcbcbc"/><path d="M2.4 6.3L5.2 9.3L10.8 3.2" fill="none" stroke="#bcbcbc" stroke-width="1.15"/></svg>
<span id="t68" class="t" style="left:256.9px;top:566px;font-size:12px;line-height:14px;color:#7c7c7c;transform:scaleX(0.9701);">Reexportar XMLs alterados no fechamento</span>
<svg style="left:241px;top:592px" width="13" height="13"><rect x="0.5" y="0.5" width="12" height="12" fill="#fff" stroke="#333"/><path d="M2.4 6.3L5.2 9.3L10.8 3.2" fill="none" stroke="#333" stroke-width="1.15"/></svg>
<span id="t69" class="t" style="left:256.9px;top:592px;font-size:12px;line-height:14px;color:#000;transform:scaleX(0.9915);">Imprimir comprovante para Pré-venda cancelada</span>
<svg style="left:241px;top:618px" width="13" height="13"><rect x="0.5" y="0.5" width="12" height="12" fill="#fff" stroke="#333"/></svg>
<span id="t70" class="t" style="left:256.9px;top:618px;font-size:12px;line-height:14px;color:#000;transform:scaleX(0.9836);">Utilizar pagamentos do Cupom Vinculado na NFe</span>
<div style="left:730px;top:389px;width:241px;height:251px;border:1px solid #dcdcdc;"></div>
<div style="left:737px;top:383px;width:98px;height:14px;background:#f4f7fc;"></div>
<span id="t71" class="t" style="left:739.4px;top:383px;font-size:12px;line-height:14px;color:#000;transform:scaleX(0.9338);">CST padrão (NFe)</span>
<span id="t72" class="t" style="left:811.9px;top:470px;font-size:12px;line-height:14px;color:#000;transform:scaleX(0.8728);">CST PIS:</span>
<div style="left:865px;top:465px;width:50px;height:23px;background:#fff;border:1px solid #7a7a7a;"></div>
<span id="t73" class="t" style="left:786.9px;top:558px;font-size:12px;line-height:14px;color:#000;transform:scaleX(0.9031);">CST COFINS:</span>
<div style="left:865px;top:553px;width:50px;height:23px;background:#fff;border:1px solid #7a7a7a;"></div>
<div style="left:729px;top:381px;width:243px;height:260px;border:2px solid #f02d2d;"></div>
<div style="left:731px;top:383px;width:239px;height:1px;background:#8a9494;"></div>
<div style="left:729px;top:641px;width:243px;height:1px;background:#7a8a8a;"></div>
<div style="left:977px;top:389px;width:347px;height:251px;border:1px solid #dcdcdc;"></div>
<div style="left:984px;top:383px;width:91px;height:14px;background:#f4f7fc;"></div>
<span id="t74" class="t" style="left:985.9px;top:383px;font-size:12px;line-height:14px;color:#000;transform:scaleX(0.9816);">Numeração NFe</span>
<div style="left:984px;top:405px;width:333px;height:183px;background:#fff;border:1px solid #a0a0a0;"></div>
<div style="left:986px;top:406.5px;width:330px;height:20px;background:#f0f0f0;"></div>
<div style="left:986px;top:426px;width:330px;height:1px;background:#6d6d6d;"></div>
<div style="left:997px;top:406.5px;width:1px;height:20px;background:#6d6d6d;"></div>
<div style="left:1057px;top:406.5px;width:1px;height:20px;background:#6d6d6d;"></div>
<div style="left:1207px;top:406.5px;width:1px;height:20px;background:#6d6d6d;"></div>
<div style="left:986px;top:446px;width:330px;height:1px;background:#c0c0c0;"></div>
<div style="left:997px;top:427px;width:1px;height:20px;background:#c0c0c0;"></div>
<div style="left:1057px;top:427px;width:1px;height:20px;background:#c0c0c0;"></div>
<div style="left:1207px;top:427px;width:1px;height:20px;background:#c0c0c0;"></div>
<div style="left:986px;top:427px;width:11px;height:19px;background:#f0f0f0;"></div>
<div style="left:998px;top:427px;width:59px;height:19px;background:#0078d7;"></div>
<svg style="left:986px;top:427px" width="12" height="19"><path d="M3 3.5L9 9.5L3 15.5Z" fill="#000"/></svg>
<span id="t75" class="t" style="left:1001.4px;top:410px;font-size:12px;line-height:14px;color:#000;transform:scaleX(0.9066);">Série</span>
<span id="t76" class="t" style="left:1061.4px;top:410px;font-size:12px;line-height:14px;color:#000;transform:scaleX(0.9982);">Última NF-e</span>
<span id="t77" class="t" style="left:1210.9px;top:410px;font-size:12px;line-height:14px;color:#000;transform:scaleX(1.0408);">Tipo Ambiente</span>
<span id="t78" class="t" style="left:1035.9px;top:430px;font-size:12px;line-height:14px;color:#fff;transform:scaleX(0.8936);">001</span>
<span id="t79" class="t" style="left:1143.9px;top:430px;font-size:12px;line-height:14px;color:#000;transform:scaleX(0.9124);">0000000009</span>
<div style="left:986px;top:571px;width:330px;height:16px;background:#f0f0f0;"></div>
<div style="left:1003px;top:572px;width:280px;height:14px;background:#cdcdcd;"></div>
<svg style="left:986px;top:571px" width="330" height="16"><g stroke="#484848" stroke-width="2" fill="none"><path d="M10.500 4.5L7 8L10.500 11.5"/><path d="M317.500 4.5L321 8L317.500 11.5"/></g></svg>
<div style="left:985px;top:595px;width:32px;height:23px;background:#cccccc;border:1px solid #bfbfbf;"></div>
<svg style="left:985px;top:594.7px" width="32" height="22"><path d="M8.5 3V19" stroke="#585858" stroke-width="1.6"/><path d="M10.0 11L17.5 4V8H23.0V14H17.5V18Z" fill="#b0b0b0" stroke="#585858" stroke-width="1"/></svg>
<div style="left:1019px;top:595px;width:32px;height:23px;background:#cccccc;border:1px solid #bfbfbf;"></div>
<svg style="left:1019px;top:594.7px" width="32" height="22"><path d="M8.5 11L16.0 4V8H22.5V14H16.0V18Z" fill="#b0b0b0" stroke="#585858" stroke-width="1"/></svg>
<div style="left:1053px;top:595px;width:32px;height:23px;background:#e1e1e1;border:1px solid #adadad;"></div>
<svg style="left:1053px;top:594.7px" width="32" height="22"><path d="M23.5 11L16.0 4V8H9.5V14H16.0V18Z" fill="#56c010" stroke="#2a7a00" stroke-width="1"/><path d="M10.5 9.2H17.0V6.5L21.5 10.6" fill="none" stroke="#a8e860" stroke-width="1"/></svg>
<div style="left:1087px;top:595px;width:31px;height:23px;background:#e1e1e1;border:1px solid #adadad;"></div>
<svg style="left:1087px;top:594.7px" width="31" height="22"><path d="M22.5 3V19" stroke="#2a7a00" stroke-width="1.8"/><path d="M21.0 11L13.5 4V8H8.0V14H13.5V18Z" fill="#56c010" stroke="#2a7a00" stroke-width="1"/><path d="M9.0 9.2H14.5V6.5L19.0 10.6" fill="none" stroke="#a8e860" stroke-width="1"/></svg>
<div style="left:1120px;top:595px;width:31px;height:23px;background:#e1e1e1;border:1px solid #adadad;"></div>
<svg style="left:1120px;top:594.7px" width="31" height="22"><path d="M13.9 5.5H17.1V9.4H21.0V12.6H17.1V16.5H13.9V12.6H10.0V9.4H13.9Z" fill="#cfe2f8" stroke="#2f6ec0" stroke-width="1.2"/></svg>
<div style="left:1153px;top:595px;width:31px;height:23px;background:#e1e1e1;border:1px solid #adadad;"></div>
<svg style="left:1153px;top:594.7px" width="31" height="22"><path d="M9.0 8H22.0V17.5Q22.0 18.5 21.0 18.5H10.0Q9.0 18.5 9.0 17.5Z" fill="#a8b850" stroke="#5a6a18" stroke-width="1.1"/><rect x="8.0" y="4.2" width="15" height="4.4" rx="1.6" fill="#e8ecd0" stroke="#5a6a18" stroke-width="1.1"/><rect x="10.0" y="5.6" width="11" height="1.8" fill="#484848"/><circle cx="15.5" cy="13.6" r="2.4" fill="none" stroke="#d8e0a8" stroke-width="1" stroke-dasharray="2 1"/></svg>
<div style="left:1186px;top:595px;width:31px;height:23px;background:#e1e1e1;border:1px solid #adadad;"></div>
<svg style="left:1186px;top:594.7px" width="31" height="22"><path d="M7.5 17.5L8.9 14L19.9 4.6L22.7 7.2L11.1 16.6Z" fill="#f0a020" stroke="#7a5010" stroke-width=".9"/><path d="M9.5 14.5L20.5 5.2" stroke="#ffd880" stroke-width="1"/><path d="M19.9 4.6L21.5 3.4Q23.1 3 23.7 4.4L22.7 7.2Z" fill="#f02030"/><path d="M7.5 17.5L8.2 15.6L9.5 16.8Z" fill="#303030"/></svg>
<div style="left:1219px;top:595px;width:31px;height:23px;background:#cccccc;border:1px solid #bfbfbf;"></div>
<svg style="left:1219px;top:594.7px" width="31" height="22"><path d="M8.0 11L10.5 8.6L13.9 12.4L20.9 5L23.1 7L13.9 16.6Z" fill="#b4b4b4" stroke="#8a8a8a" stroke-width="1"/></svg>
<div style="left:1252px;top:595px;width:31px;height:23px;background:#cccccc;border:1px solid #bfbfbf;"></div>
<svg style="left:1252px;top:594.7px" width="31" height="22"><path d="M8.5 9L14.5 3.4V6.6C20.5 6.6 22.9 11 20.5 17.6C20.1 13.6 18.5 11.4 14.5 11.4V14.6Z" fill="#d4d4d4" stroke="#a0a0a0" stroke-width="1"/></svg>
<div style="left:1285px;top:595px;width:31px;height:23px;background:#e1e1e1;border:1px solid #adadad;"></div>
<svg style="left:1285px;top:594.7px" width="31" height="22"><g fill="none" stroke="#1f5aa8" stroke-width="3.8"><path d="M10.2 10.2A5.4 5.4 0 0 1 19.1 6.6"/><path d="M20.8 11.8A5.4 5.4 0 0 1 11.9 15.4"/></g><path d="M22.9 3.6V10.6H16.1Z" fill="#3c82d8" stroke="#1f5aa8" stroke-width=".9"/><path d="M8.1 18.4V11.4H14.9Z" fill="#3c82d8" stroke="#1f5aa8" stroke-width=".9"/><g fill="none" stroke="#4a94ea" stroke-width="2.2"><path d="M10.2 10.2A5.4 5.4 0 0 1 19.1 6.6"/><path d="M20.8 11.8A5.4 5.4 0 0 1 11.9 15.4"/></g><g fill="none" stroke="#cfe4ff" stroke-width=".9"><path d="M10.9 8.6A5 5 0 0 1 18.1 6"/><path d="M20.1 13.4A5 5 0 0 1 12.9 16"/></g></svg>
<span id="t80" class="t" style="left:1050.4px;top:624px;font-size:12.6px;line-height:14px;color:#000;font-weight:bold;transform:scaleX(1.0238);">1 - Produção,   2 - Homologação</span>
<div style="left:231px;top:655px;width:494px;height:20px;border:1px solid #dcdcdc;clip-path:inset(0 0 17px 0);"></div>
<div style="left:237px;top:650px;width:36px;height:8px;background:#f4f7fc;"></div>
<span id="t81" class="t" style="left:239.9px;top:649px;font-size:12px;line-height:14px;color:#000;transform:scaleX(0.9858);clip-path:inset(0 0 5px 0);">NFCe</span>
<div style="left:730px;top:655px;width:594px;height:20px;border:1px solid #dcdcdc;clip-path:inset(0 0 17px 0);"></div>
<div style="left:737px;top:650px;width:30px;height:8px;background:#f4f7fc;"></div>
<span id="t82" class="t" style="left:739.4px;top:649px;font-size:12px;line-height:14px;color:#000;transform:scaleX(0.9430);clip-path:inset(0 0 5px 0);">MFE</span>
<div style="left:216px;top:665px;width:1140px;height:29px;background:#f4f7fc;"></div>
<div style="left:1165px;top:668px;width:78px;height:24px;background:#e1e1e1;border:1px solid #adadad;"></div>
<span id="t83" class="t" style="left:1196.9px;top:673px;font-size:12px;line-height:14px;color:#000;transform:scaleX(0.9513);">Gravar</span>
<svg style="left:1176px;top:672.3px" width="18" height="16"><path d="M.9 7.7L4 4.7L7 8.2L13.7 .9L17 3.6L7.1 14.8Z" fill="#58cc1c" stroke="#1a6a0a" stroke-width="1" stroke-linejoin="round"/><path d="M2.6 7.4L4 6.2L7 9.8L13.8 2.4" fill="none" stroke="#b8f48c" stroke-width="1.1"/></svg>
<div style="left:1255px;top:668px;width:90px;height:24px;background:#e1e1e1;border:1px solid #adadad;"></div>
<span id="t84" class="t" style="left:1286.9px;top:673px;font-size:12px;line-height:14px;color:#000;transform:scaleX(0.9764);">Cancelar</span>
<svg style="left:1266px;top:671px" width="18" height="18"><g stroke-linecap="round" fill="none"><path d="M3.6 3.6L14 14.2M14 3.6L3.6 14.2" stroke="#a80c14" stroke-width="5.6"/><path d="M3.6 3.6L14 14.2M14 3.6L3.6 14.2" stroke="#f4202c" stroke-width="4.2"/><path d="M3.2 3.4L8.6 8.4M13.8 3.2L10.4 6.6" stroke="#ff8c8c" stroke-width="1.1"/></g></svg>
<div style="left:0px;top:704px;width:1366px;height:24px;background:#f0f0f0;"></div>
<div style="left:0px;top:704px;width:1366px;height:1px;background:#d8d8d8;"></div>
<div style="left:49px;top:706px;width:1px;height:20px;background:#d7d7d7;"></div>
<div style="left:449px;top:706px;width:1px;height:20px;background:#d7d7d7;"></div>
<div style="left:0px;top:726px;width:1366px;height:1px;background:#d0d0d0;"></div>
<div style="left:0px;top:727px;width:1366px;height:1px;background:#a0a0a0;"></div>
<span id="t85" class="t" style="left:2.9px;top:710px;font-size:12px;line-height:14px;color:#000;transform:scaleX(0.7327);">1</span>
<span id="t86" class="t" style="left:53.9px;top:710px;font-size:12px;line-height:14px;color:#000;transform:scaleX(1.0157);">Alterar</span>
</div></body></html>
